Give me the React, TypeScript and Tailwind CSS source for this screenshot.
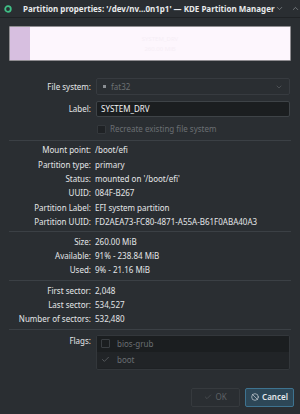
import { Check, ChevronDown, ChevronUp, X, Ban } from "lucide-react";

const font = { fontFamily: '"Noto Sans", "Liberation Sans", sans-serif' };

function Row({ label, value }: { label: string; value: string }) {
  return (
    <div className="flex h-[14.4px] items-center">
      <div className="w-[82px] text-right text-[#e4e6e8] whitespace-nowrap">{label}</div>
      <div className="ml-[4px] text-[#e4e6e8] whitespace-nowrap">{value}</div>
    </div>
  );
}

function Sep({ mt }: { mt: string }) {
  return <div className={`h-px bg-[#3b4045] ${mt}`} />;
}

export default function App() {
  return (
    <div style={font} className="w-[300px] h-[414px] bg-[#2a2e32] text-[8px] leading-none overflow-hidden">
      {/* title bar */}
      <div className="h-[18px] flex items-center border-b border-[#1f2225] bg-[#2a2e32]">
        <svg width="8" height="8" viewBox="0 0 8 8" className="ml-[4px] shrink-0">
          <circle cx="4" cy="4" r="2.8" fill="none" stroke="#3fbf86" strokeWidth="1.8" />
        </svg>
        <div className="ml-[11px] font-bold text-[#e8eaec] whitespace-nowrap">
          Partition properties: '/dev/nv...0n1p1' — KDE Partition Manager
        </div>
        <div className="ml-auto flex items-center gap-[7px] pr-[3px] text-[#a3a7ab]">
          <ChevronDown size={9} strokeWidth={1.5} />
          <ChevronUp size={9} strokeWidth={1.5} />
          <X size={9} strokeWidth={1.5} />
        </div>
      </div>

      <div className="px-[9px]">
        {/* usage bar */}
        <div className="mt-[8px] h-[35px] flex border border-[#8f8d91] bg-[#fdf6fd] rounded-[1px] overflow-hidden">
          <div className="w-[20px] bg-[#d7bfe0]" />
          <div className="flex-1 flex flex-col items-center justify-center gap-[4px] text-[#f6eef6] text-[6px]">
            <span>SYSTEM_DRV</span>
            <span>260.00 MiB</span>
          </div>
        </div>

        {/* file system */}
        <div className="mt-[17px] flex items-center h-[17px]">
          <div className="w-[82px] text-right text-[#e4e6e8]">File system:</div>
          <div className="ml-[5px] mr-px flex-1 h-[17px] flex items-center border border-[#373b40] rounded-[2px] bg-[#2a2e32] px-[6px]">
            <div className="w-[3px] h-[3px] bg-[#8a8e92]" />
            <span className="ml-[5px] text-[#6c7074]">fat32</span>
            <ChevronDown size={8} strokeWidth={1.5} className="ml-auto text-[#6c7074]" />
          </div>
        </div>

        {/* label */}
        <div className="mt-[6px] flex items-center h-[16px]">
          <div className="w-[82px] text-right text-[#e4e6e8]">Label:</div>
          <div className="ml-[5px] mr-px flex-1 h-[16px] flex items-center border border-[#3e4347] rounded-[2px] bg-[#1b1e20] px-[4px] text-[#f1f2f3]">
            SYSTEM_DRV
          </div>
        </div>

        {/* recreate */}
        <div className="mt-[7px] flex items-center h-[10px]">
          <div className="ml-[88px] w-[9px] h-[9px] border border-[#34383c] bg-[#1f2225] rounded-[1px]" />
          <span className="ml-[4px] text-[#6a6e72]">Recreate existing file system</span>
        </div>

        <Sep mt="mt-[6px]" />
        <div className="mt-[2px]">
          <Row label="Mount point:" value="/boot/efi" />
          <Row label="Partition type:" value="primary" />
          <Row label="Status:" value="mounted on '/boot/efi'" />
          <Row label="UUID:" value="084F-B267" />
          <Row label="Partition Label:" value="EFI system partition" />
          <Row label="Partition UUID:" value="FD2AEA73-FC80-4871-A55A-B61F0ABA40A3" />
        </div>
        <Sep mt="mt-[2px]" />
        <div className="mt-[2px]">
          <Row label="Size:" value="260.00 MiB" />
          <Row label="Available:" value="91% - 238.84 MiB" />
          <Row label="Used:" value="9% - 21.16 MiB" />
        </div>
        <Sep mt="mt-[2px]" />
        <div className="mt-[3px]">
          <Row label="First sector:" value="2,048" />
          <Row label="Last sector:" value="534,527" />
          <Row label="Number of sectors:" value="532,480" />
        </div>
        <Sep mt="mt-[2px]" />

        {/* flags */}
        <div className="mt-[5px] flex items-start">
          <div className="w-[82px] text-right text-[#e4e6e8] mt-[2px]">Flags:</div>
          <div className="ml-[5px] mr-px flex-1 h-[35px] border border-[#33373b] rounded-[2px] bg-[#1e2124] overflow-hidden">
            <div className="h-[16px] flex items-center bg-[#1b1e20] px-[4px]">
              <div className="w-[9px] h-[9px] border border-[#3a3e42] rounded-[1px]" />
              <span className="ml-[7px] text-[#6a6e72]">bios-grub</span>
            </div>
            <div className="h-[16px] flex items-center bg-[#212427] px-[4px]">
              <Check size={9} strokeWidth={1.5} className="text-[#7a7e82]" />
              <span className="ml-[7px] text-[#6a6e72]">boot</span>
            </div>
          </div>
        </div>

        {/* buttons */}
        <div className="mt-[18px] flex justify-end gap-[5px] -mr-[3px]">
          <div className="w-[49px] h-[19px] flex items-center justify-center gap-[3px] border border-[#363a3e] rounded-[2px] bg-[#2a2e32] text-[#5e6266]">
            <Check size={8} strokeWidth={1.5} />
            <span>OK</span>
          </div>
          <div className="w-[49px] h-[19px] flex items-center justify-center gap-[3px] border border-[#3e7390] rounded-[2px] bg-[#2d4757] text-[#e4e8eb]">
            <Ban size={8} strokeWidth={1.8} />
            <span className="font-semibold">Cancel</span>
          </div>
        </div>
      </div>
    </div>
  );
}
